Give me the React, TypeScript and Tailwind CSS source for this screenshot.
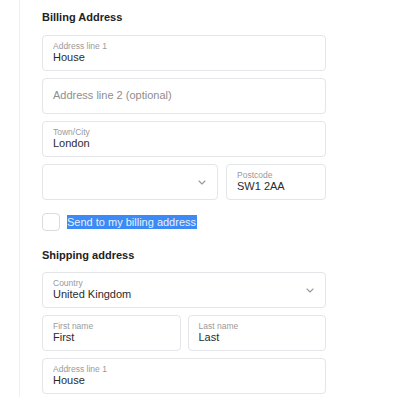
import React from 'react';

const Chevron: React.FC = () => (
  <svg width="8" height="5" viewBox="0 0 8 5" fill="none" className="shrink-0">
    <path d="M1 1l3 3 3-3" stroke="#9a9a9a" strokeWidth="1.1" strokeLinecap="round" strokeLinejoin="round" />
  </svg>
);

const Field: React.FC<{ label?: string; value?: string; placeholder?: string; className?: string; select?: boolean }> = ({
  label,
  value,
  placeholder,
  className = '',
  select,
}) => (
  <div className={`h-9 flex items-center rounded-[4px] border border-[#e3e5e8] bg-white pl-[10px] pr-[11px] ${className}`}>
    <div className="flex-1 flex flex-col justify-center min-w-0 pb-[1px]">
      {label && <span className="text-[8.5px] leading-[10px] text-[#9a9a9a]">{label}</span>}
      {value && <span className="text-[11px] leading-[13px] text-[#2b2b2b]">{value}</span>}
      {placeholder && <span className="text-[11px] leading-[13px] text-[#8e8e8e]">{placeholder}</span>}
    </div>
    {select && <Chevron />}
  </div>
);

const App: React.FC = () => {
  return (
    <div className="min-h-[397px] w-[409px] bg-white font-['Liberation_Sans',Arial,sans-serif]">
      <div className="ml-[19px] min-h-[397px] border-l border-[#efefef] pl-[22px] pt-[10px]">
        <div className="w-[284px]">
          {/* Billing */}
          <h2 className="text-[11px] leading-[14px] font-bold text-[#222]">Billing Address</h2>
          <div className="mt-[11px] flex flex-col gap-[7px]">
            <Field label="Address line 1" value="House" />
            <Field placeholder="Address line 2 (optional)" />
            <Field label="Town/City" value="London" />
            <div className="flex gap-[8px]">
              <Field className="w-[176px]" select />
              <Field className="flex-1" label="Postcode" value="SW1 2AA" />
            </div>
          </div>

          <div className="mt-[13px] flex items-center gap-[7px]">
            <div className="w-[18px] h-[18px] rounded-[4px] border border-[#d9dbde] bg-white" />
            <span className="text-[11px] leading-[14px] bg-[#3b8af5] text-[#e6f0fd] pr-[1px]">Send to my billing address</span>
          </div>

          {/* Shipping */}
          <h2 className="mt-[17px] text-[11px] leading-[14px] font-bold text-[#222]">Shipping address</h2>
          <div className="mt-[10px] flex flex-col gap-[7px]">
            <Field label="Country" value="United Kingdom" select />
            <div className="flex gap-[7px]">
              <Field className="flex-1" label="First name" value="First" />
              <Field className="flex-1" label="Last name" value="Last" />
            </div>
            <Field label="Address line 1" value="House" />
          </div>
        </div>
      </div>
    </div>
  );
};

export default App;
